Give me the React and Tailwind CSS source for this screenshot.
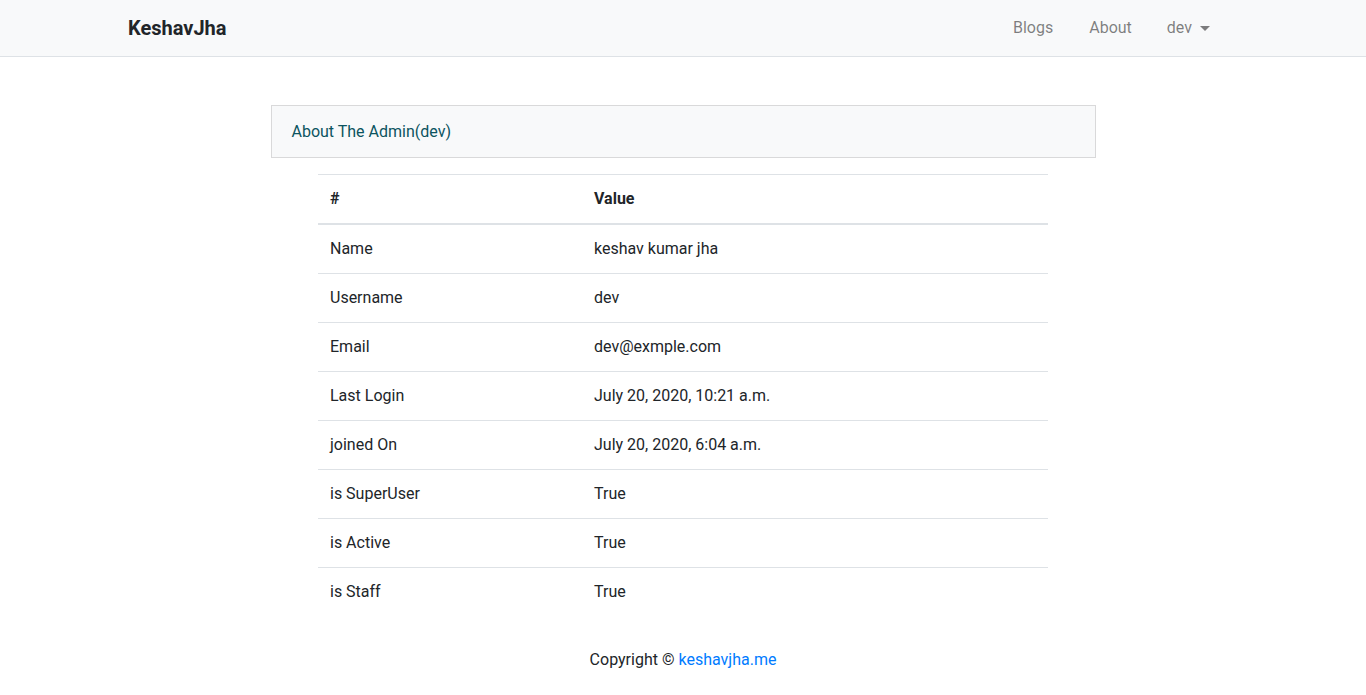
export default function App() {
  const rows = [
    ["Name", "keshav kumar jha"],
    ["Username", "dev"],
    ["Email", "dev@exmple.com"],
    ["Last Login", "July 20, 2020, 10:21 a.m."],
    ["joined On", "July 20, 2020, 6:04 a.m."],
    ["is SuperUser", "True"],
    ["is Active", "True"],
    ["is Staff", "True"],
  ];
  return (
    <div className="min-h-[695px] bg-white text-[#212529] text-[16px] leading-6" style={{ fontFamily: "Roboto, 'Liberation Sans', sans-serif" }}>
      <nav className="h-[57px] bg-[#f8f9fa] border-b border-[#dee2e6]">
        <div className="w-[1140px] mx-auto px-[15px] h-[56px] flex items-center justify-between">
          <a className="text-[20px] font-bold text-[#212529] leading-[30px]">KeshavJha</a>
          <div className="flex items-center pr-[28px] text-[rgba(0,0,0,0.5)]">
            <a className="mr-9">Blogs</a>
            <a className="mr-[35px]">About</a>
            <a className="flex items-center">
              dev
              <span className="ml-[8px] w-0 h-0 border-l-[5px] border-r-[5px] border-t-[5px] border-l-transparent border-r-transparent border-t-[rgba(0,0,0,0.5)]"></span>
            </a>
          </div>
        </div>
      </nav>
      <div className="w-[825px] mx-auto mt-12 border border-[rgba(0,0,0,0.125)] bg-[#f8f9fa] h-[53px] pt-px px-5 flex items-center text-[#0c5460]">
        About The Admin(dev)
      </div>
      <table className="w-[730px] mx-auto mt-4 border-collapse">
        <thead>
          <tr className="border-t border-[#dee2e6] border-b-2">
            <th className="text-left font-bold p-3 w-[264px] h-[49px]">#</th>
            <th className="text-left font-bold p-3">Value</th>
          </tr>
        </thead>
        <tbody>
          {rows.map(([k, v], i) => (
            <tr key={k} className={i === 0 ? "" : "border-t border-[#dee2e6]"}>
              <td className="p-3 h-[49px]">{k}</td>
              <td className="p-3">{v}</td>
            </tr>
          ))}
        </tbody>
      </table>
      <footer className="text-center mt-[31px]">
        Copyright © <a className="text-[#007bff]">keshavjha.me</a>
      </footer>
    </div>
  );
}
